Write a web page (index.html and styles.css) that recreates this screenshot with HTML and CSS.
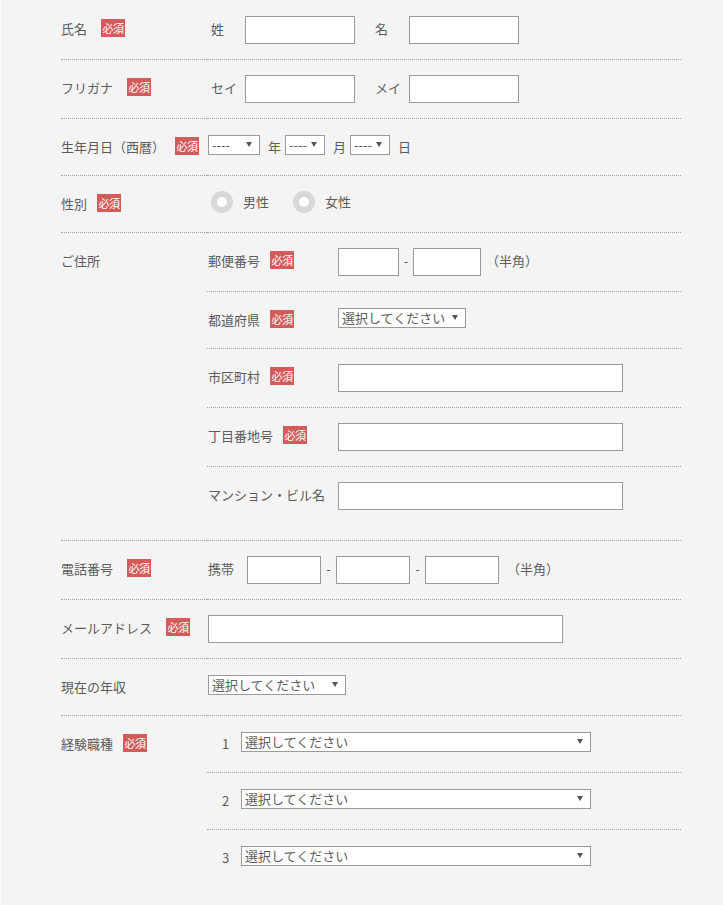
FILE: index.html
```html
<!DOCTYPE html>
<html lang="ja">
<head>
<meta charset="utf-8">
<title>フォーム</title>
<link rel="stylesheet" href="styles.css">
</head>
<body>
<div class="page">
  <dl class="form">
    <div class="row">
      <dt class="label">氏名<span class="req">必須</span></dt>
      <dd class="field field--parts">
        <span class="part"><span class="part-label">姓</span><input class="text w110" type="text"></span>
        <span class="part"><span class="part-label">名</span><input class="text w110" type="text"></span>
      </dd>
    </div>
    <div class="row">
      <dt class="label">フリガナ<span class="req">必須</span></dt>
      <dd class="field field--parts">
        <span class="part"><span class="part-label">セイ</span><input class="text w110" type="text"></span>
        <span class="part"><span class="part-label">メイ</span><input class="text w110" type="text"></span>
      </dd>
    </div>
    <div class="row">
      <dt class="label">生年月日（西暦）<span class="req req--tight">必須</span></dt>
      <dd class="field">
        <span class="select w52"><select><option>----</option></select></span>
        <span class="unit">年</span>
        <span class="select w40"><select><option>----</option></select></span>
        <span class="unit">月</span>
        <span class="select w40"><select><option>----</option></select></span>
        <span class="unit">日</span>
      </dd>
    </div>
    <div class="row">
      <dt class="label">性別<span class="req req--tight">必須</span></dt>
      <dd class="field field--radios">
        <label class="radio-item"><input class="radio" type="radio" name="sex">男性</label>
        <label class="radio-item"><input class="radio" type="radio" name="sex">女性</label>
      </dd>
    </div>
    <div class="row">
      <dt class="label">ご住所</dt>
      <dd class="field field--stack">
        <div class="sub-row">
          <div class="sub-label">郵便番号<span class="req">必須</span></div>
          <div class="sub-field">
            <input class="text w61" type="text"><span class="sep w14">-</span><input class="text w68" type="text"><span class="note note--zip">（半角）</span>
          </div>
        </div>
        <div class="sub-row">
          <div class="sub-label">都道府県<span class="req">必須</span></div>
          <div class="sub-field">
            <span class="select w128"><select><option>選択してください</option></select></span>
          </div>
        </div>
        <div class="sub-row">
          <div class="sub-label">市区町村<span class="req">必須</span></div>
          <div class="sub-field"><input class="text w285" type="text"></div>
        </div>
        <div class="sub-row">
          <div class="sub-label">丁目番地号<span class="req">必須</span></div>
          <div class="sub-field"><input class="text w285" type="text"></div>
        </div>
        <div class="sub-row">
          <div class="sub-label">マンション・ビル名</div>
          <div class="sub-field"><input class="text w285" type="text"></div>
        </div>
      </dd>
    </div>
    <div class="row">
      <dt class="label">電話番号<span class="req">必須</span></dt>
      <dd class="field">
        <span class="lead">携帯</span><input class="text w74" type="text"><span class="sep w15">-</span><input class="text w74" type="text"><span class="sep w15">-</span><input class="text w74" type="text"><span class="note note--tel">（半角）</span>
      </dd>
    </div>
    <div class="row">
      <dt class="label">メールアドレス<span class="req">必須</span></dt>
      <dd class="field"><input class="text w355" type="text"></dd>
    </div>
    <div class="row">
      <dt class="label">現在の年収</dt>
      <dd class="field">
        <span class="select w138"><select><option>選択してください</option></select></span>
      </dd>
    </div>
    <div class="row row--last">
      <dt class="label">経験職種<span class="req req--tight">必須</span></dt>
      <dd class="field field--stack">
        <div class="job-row"><span class="num">1</span><span class="select w350"><select><option>選択してください</option></select></span></div>
        <div class="job-row"><span class="num">2</span><span class="select w350"><select><option>選択してください</option></select></span></div>
        <div class="job-row"><span class="num">3</span><span class="select w350"><select><option>選択してください</option></select></span></div>
      </dd>
    </div>
  </dl>
</div>
</body>
</html>
```
FILE: styles.css
```css
* { box-sizing: border-box; }

html, body {
  margin: 0;
  background: #fbfbfb;
}

body {
  font-family: "Noto Sans CJK JP", "Noto Sans", sans-serif;
  font-size: 13px;
  color: #5c5c5c;
}

.page {
  margin-left: 1px;
  min-height: 905px;
  padding-top: 1px;
  background: #f4f4f4;
}

.form {
  margin: 0 0 0 60px;
  width: 620px;
}

.row {
  display: flex;
}

.label,
.field {
  margin: 0;
  padding: 15px 0;
  line-height: 26px;
  border-bottom: 1px dotted #a5a5a5;
}

.row--last .label,
.row--last .field {
  border-bottom: 0;
}

.label {
  flex: none;
  width: 146px;
  white-space: nowrap;
}

.field {
  flex: 1;
  display: flex;
  align-items: flex-start;
  padding-left: 1px;
}

.req {
  display: inline-block;
  vertical-align: top;
  width: 24px;
  height: 18px;
  margin: 3px 0 0 14px;
  background: #d55a5a;
  color: #fff;
  font-size: 11px;
  line-height: 18px;
  text-align: center;
  letter-spacing: -0.5px;
}

.req--tight { margin-left: 10px; }

/* text inputs */
.text {
  display: block;
  flex: none;
  height: 28px;
  margin: 0;
  padding: 0 4px;
  border: 1px solid #9b9b9b;
  border-radius: 0;
  background: #fff;
  font: inherit;
  color: inherit;
}

.w61 { width: 61px; }
.w68 { width: 68px; }
.w74 { width: 74px; }
.w110 { width: 110px; }
.w285 { width: 285px; }
.w355 { width: 355px; }

/* name parts */
.field--parts {
  padding-left: 4px;
  gap: 20px;
}

.part {
  display: flex;
  flex: none;
}

.part-label {
  width: 34px;
  flex: none;
}

/* selects */
.select {
  position: relative;
  display: block;
  flex: none;
  height: 20px;
  margin-top: 1px;
  border: 1px solid #9b9b9b;
  background: #fff;
}

.select select {
  display: block;
  width: 100%;
  height: 18px;
  margin: 0;
  padding: 0 0 0 3px;
  border: 0;
  background: transparent;
  font: inherit;
  line-height: 18px;
  color: #5c5c5c;
  appearance: none;
  -webkit-appearance: none;
  outline: none;
}

.select::after {
  content: "";
  position: absolute;
  right: 7px;
  top: 6px;
  border-left: 3px solid transparent;
  border-right: 3px solid transparent;
  border-top: 5px solid #555;
  pointer-events: none;
}

.w40 { width: 40px; }
.w52 { width: 52px; }
.w128 { width: 128px; }
.w138 { width: 138px; }
.w350 { width: 350px; }

.unit {
  flex: none;
  margin: 0 4px 0 8px;
}

/* radios */
.field--radios {
  padding-left: 4px;
  gap: 24px;
}

.radio-item {
  display: flex;
  align-items: flex-start;
  gap: 10px;
  line-height: 22px;
}

.radio {
  flex: none;
  width: 22px;
  height: 22px;
  margin: 0;
  border: 6px solid #d8d8d8;
  border-radius: 50%;
  background: #fff;
  appearance: none;
  -webkit-appearance: none;
}

/* stacked sub rows */
.field--stack {
  flex-direction: column;
  align-items: stretch;
  padding-left: 0;
}

.sub-row {
  display: flex;
}

.sub-label,
.sub-field {
  padding: 15px 0;
  border-bottom: 1px dotted #a5a5a5;
}

.sub-row:first-child .sub-label,
.sub-row:first-child .sub-field {
  padding-top: 0;
}

.sub-row:last-child .sub-label,
.sub-row:last-child .sub-field {
  border-bottom: 0;
}

.sub-label {
  flex: none;
  width: 131px;
  padding-left: 1px;
  white-space: nowrap;
}

.sub-label .req { margin-left: 10px; }

.sub-field {
  flex: 1;
  display: flex;
  align-items: flex-start;
}

.sep {
  flex: none;
  text-align: center;
}

.w14 { width: 14px; }
.w15 { width: 15px; }

.note { flex: none; }
.note--zip { margin-left: 5px; }
.note--tel { margin-left: 8px; }

.lead {
  flex: none;
  width: 39px;
}

/* job rows */
.job-row {
  display: flex;
  align-items: flex-start;
  padding: 15px 0;
  border-bottom: 1px dotted #a5a5a5;
}

.job-row:first-child { padding-top: 0; }
.job-row:last-child { border-bottom: 0; }

.num {
  flex: none;
  width: 34px;
  padding-left: 15px;
}
```
